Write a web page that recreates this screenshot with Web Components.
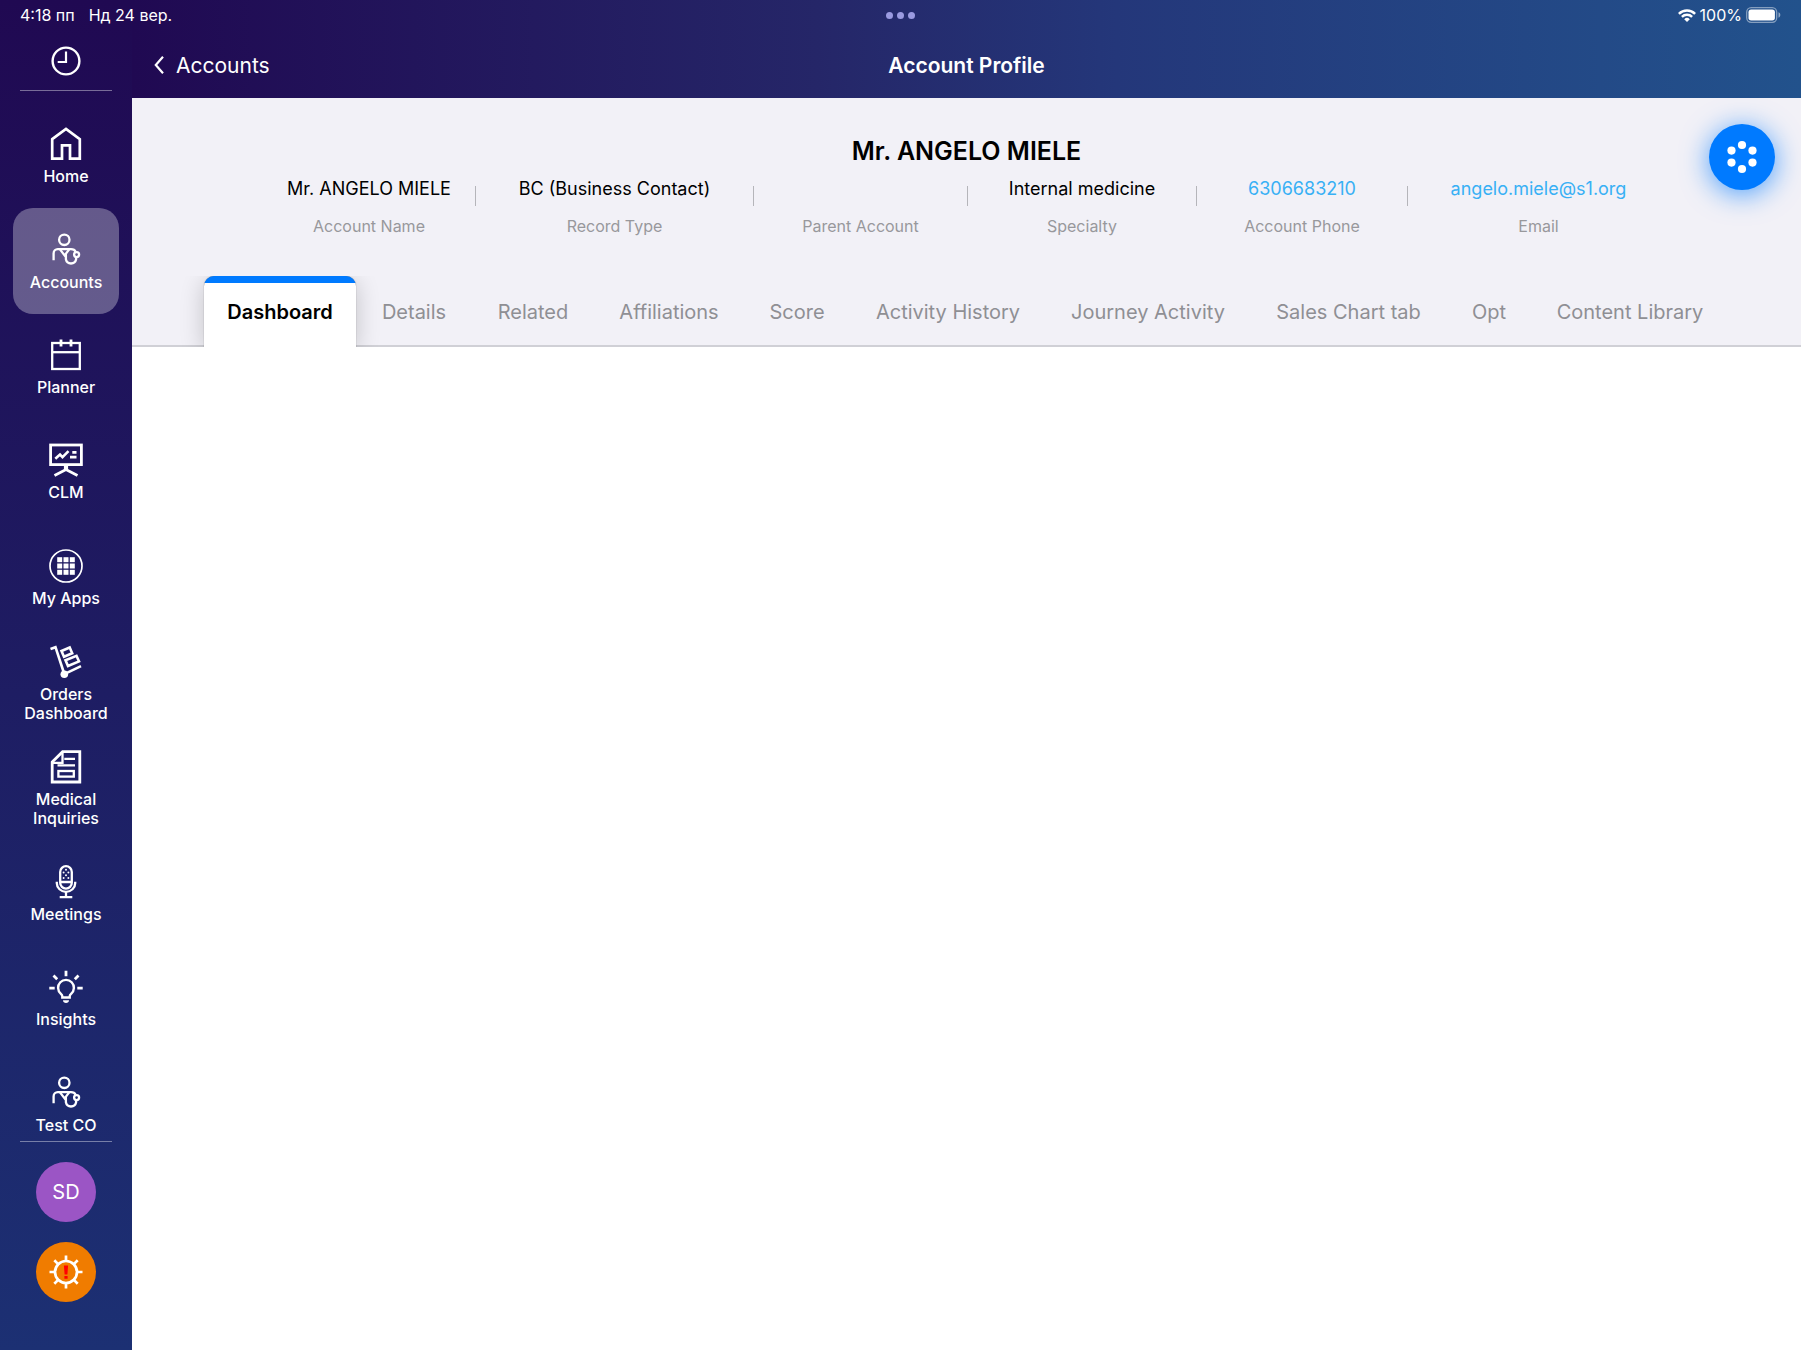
<!DOCTYPE html>
<html lang="en">
<head>
<meta charset="utf-8">
<meta name="viewport" content="width=device-width, initial-scale=1">
<title>Account Profile</title>
<style>
    body {
        margin: 0;
        background: #fff;
        font-family: Inter, "Liberation Sans", sans-serif;
        -webkit-font-smoothing: antialiased;
    }
</style>
</head>
<body>

<crm-app>
    <crm-status-bar slot="status"></crm-status-bar>

    <crm-sidebar slot="sidebar">
        <crm-nav-item icon="home">Home</crm-nav-item>
        <crm-nav-item icon="doctor" active>Accounts</crm-nav-item>
        <crm-nav-item icon="planner">Planner</crm-nav-item>
        <crm-nav-item icon="board">CLM</crm-nav-item>
        <crm-nav-item icon="apps">My Apps</crm-nav-item>
        <crm-nav-item icon="orders">Orders Dashboard</crm-nav-item>
        <crm-nav-item icon="document">Medical Inquiries</crm-nav-item>
        <crm-nav-item icon="mic">Meetings</crm-nav-item>
        <crm-nav-item icon="bulb">Insights</crm-nav-item>
        <crm-nav-item icon="doctor">Test CO</crm-nav-item>
    </crm-sidebar>

    <crm-title-bar back="Accounts">Account Profile</crm-title-bar>

    <crm-profile name="Mr. ANGELO MIELE">
        <crm-field label="Account Name">Mr. ANGELO MIELE</crm-field>
        <crm-field label="Record Type">BC (Business Contact)</crm-field>
        <crm-field label="Parent Account"></crm-field>
        <crm-field label="Specialty">Internal medicine</crm-field>
        <crm-field label="Account Phone" href="tel:6306683210">6306683210</crm-field>
        <crm-field label="Email" href="mailto:angelo.miele@s1.org">angelo.miele@s1.org</crm-field>
    </crm-profile>

    <crm-tabs>
        <crm-tab active>Dashboard</crm-tab>
        <crm-tab>Details</crm-tab>
        <crm-tab>Related</crm-tab>
        <crm-tab>Affiliations</crm-tab>
        <crm-tab>Score</crm-tab>
        <crm-tab>Activity History</crm-tab>
        <crm-tab>Journey Activity</crm-tab>
        <crm-tab>Sales Chart tab</crm-tab>
        <crm-tab>Opt</crm-tab>
        <crm-tab>Content Library</crm-tab>
    </crm-tabs>
</crm-app>

<script>
const ICONS = {
    clock: `
        <circle cx="17" cy="17" r="13.4" stroke-width="2.4"/>
        <path d="M17 7.5V18H8.7" stroke-width="2.2"/>`,
    home: `<path d="M3.2 12.2L17 2l13.8 10.2v19.4H21V18.4h-8v13.2H3.2z" stroke-width="2.7"/>`,
    doctor: `
        <circle cx="15.3" cy="6.8" r="5.2"/>
        <path d="M4.6 27.2V20.4a4.2 4.2 0 0 1 4.2-4.2H22c2.4 0 3.8.8 4.6 2.6"/>
        <path d="M11 16.4l4.6 6 4.6-6M16.9 20.5v5.8a5.2 5.2 0 0 0 10.2 0v-2"/>
        <circle cx="27.6" cy="21.6" r="2.5"/>`,
    planner: `
        <rect x="3.2" y="5" width="27.6" height="26"/>
        <path d="M3.2 14.2h27.6"/>
        <path d="M12 1.5v7M22 1.5v7" stroke-width="2.8"/>`,
    board: `
        <rect x="1.6" y="2" width="30.8" height="19.6" stroke-width="2.8"/>
        <path d="M17 22v5" stroke-width="4.2"/>
        <path d="M5.5 32.5l11.5-6 11.5 6" stroke-width="2.8"/>
        <path d="M6.3 15.7l4.7-4.2 2.5 2.6 6-6M23.3 9.4h4.2M21 14.1h6.5" stroke-width="2.6"/>`,
    apps: `
        <circle cx="17" cy="17" r="16" stroke-width="1.7"/>
        <g fill="currentColor" stroke="none">
            ${[8.2, 14.5, 20.8].map(y => [8.2, 14.5, 20.8].map(x => `<rect x="${x}" y="${y}" width="5" height="5"/>`).join('')).join('')}
        </g>`,
    orders: `
        <path d="M1.5 4l5-1.8 8.8 26.8M15.3 29.2L32 21.2" stroke-width="2.6"/>
        <circle cx="15.3" cy="29.3" r="3.8" fill="currentColor" stroke="none"/>
        <path d="M12.5 6l8.2-3.5 2.5 5.7-8.2 3.5zM16.5 15.2l11-4.4 2.5 5.6-11 4.6z" stroke-width="2.6"/>`,
    document: `
        <path d="M3.2 12L13.6 1.7h17.2V32H3.2z" stroke-width="2.8"/>
        <path d="M4 12.8h9.5V3M15.3 8.8H26M8.5 15.3H26"/>
        <rect x="9.4" y="21" width="15.4" height="5.6"/>`,
    mic: `
        <rect x="11.2" y="1.2" width="11.6" height="22.4" rx="5.8"/>
        <path d="M11.2 17h11.6M7.8 16.8v1.4a9.2 8.6 0 0 0 18.4 0v-1.4M17 27v5M10.7 32.2h12.6"/>
        <g fill="currentColor" stroke="none">
            <circle cx="17" cy="4.8" r="1"/><circle cx="14.6" cy="7.5" r="1"/><circle cx="19.4" cy="7.5" r="1"/>
            <circle cx="17" cy="10.2" r="1"/><circle cx="14.6" cy="13" r="1"/><circle cx="19.4" cy="13" r="1"/>
        </g>`,
    bulb: `
        <path d="M13.3 27.5v-1.2c0-1-.6-1.8-1.6-2.7a7.9 7.9 0 1 1 10.6 0c-1 .9-1.6 1.7-1.6 2.7v1.2z" stroke-width="2.4"/>
        <path d="M14 30.2h6c0 1.8-1.3 2.8-3 2.8s-3-1-3-2.8z" fill="currentColor" stroke="none"/>
        <path d="M17 .8v5.4M.3 18.2h5.4M28.3 18.2h5.4M4.5 5.5l3.7 3.7M29.5 5.5l-3.7 3.7" stroke-width="2.8"/>`,
    gear: `
        <circle cx="17" cy="17" r="11" stroke-width="2.7"/>
        <path d="M17 .5v5M17 28.5v5M.5 17h5M28.5 17h5M5.3 5.3l3.6 3.6M25.1 25.1l3.6 3.6M5.3 28.7l3.6-3.6M25.1 8.9l3.6-3.6" stroke-width="2.7"/>
        <path d="M14.9 10.5h4.2l-.7 9h-2.8zM15.4 21h3.2v2.7h-3.2z" fill="#f00" stroke="none"/>`,
    flower: `
        <g fill="currentColor" stroke="none">
            <circle cx="17" cy="5" r="4.1"/><circle cx="27.5" cy="10.6" r="4.1"/><circle cx="27.5" cy="22.6" r="4.1"/>
            <circle cx="17" cy="29" r="4.1"/><circle cx="6.5" cy="22.6" r="4.1"/><circle cx="6.5" cy="10.6" r="4.1"/>
        </g>`
};

class CrmIcon extends HTMLElement {

    constructor() {
        super();
        this.attachShadow({ mode: 'open' });
    }

    connectedCallback() {
        this.shadowRoot.innerHTML = `
        <style>
        :host {
            display: block;
            flex: none;
            width: 34px;
            height: 34px;
        }

        svg {
            display: block;
            overflow: visible;
        }
        </style>
        <svg viewBox="0 0 34 34" width="34" height="34" fill="none" stroke="currentColor" stroke-width="2.3" aria-hidden="true">
            ${ICONS[this.getAttribute('name')]}
        </svg>`;
    }

}

class CrmApp extends HTMLElement {

    constructor() {
        super();
        this.attachShadow({ mode: 'open' });
        this.shadowRoot.innerHTML = `
        <style>
        :host {
            display: grid;
            grid-template-columns: 132px minmax(0, 1fr);
            position: relative;
            min-height: 100vh;
        }

        main {
            display: flex;
            flex-direction: column;
        }

        slot[name="status"]::slotted(*) {
            position: absolute;
            top: 0;
            left: 0;
            right: 0;
        }
        </style>
        <slot name="sidebar"></slot>
        <main><slot></slot></main>
        <slot name="status"></slot>`;
    }

}

class CrmStatusBar extends HTMLElement {

    constructor() {
        super();
        this.attachShadow({ mode: 'open' });
        this.shadowRoot.innerHTML = `
        <style>
        :host {
            display: grid;
            grid-template-columns: 1fr auto 1fr;
            align-items: center;
            box-sizing: border-box;
            height: 32px;
            padding: 0 20px;
            color: #fff;
            font-size: 16px;
            line-height: 30px;
        }

        .time, .power, .dots {
            display: flex;
            align-items: center;
            height: 30px;
            margin-bottom: 2px;
        }

        .time {
            gap: 14px;
        }

        .dots {
            gap: 4px;
        }

        .dots i {
            width: 7px;
            height: 7px;
            border-radius: 50%;
            background: #9a9ae0;
        }

        .power {
            justify-content: flex-end;
            gap: 4px;
        }

        svg {
            display: block;
        }
        </style>
        <div class="time"><span>4:18 пп</span><span>Нд 24 вер.</span></div>
        <div class="dots"><i></i><i></i><i></i></div>
        <div class="power">
            <svg width="18" height="13" viewBox="0 0 18 13" fill="none" stroke="#fff" stroke-width="2.5">
                <path d="M.9 4.8a11.6 11.6 0 0 1 16.2 0M3.9 7.9a7.3 7.3 0 0 1 10.2 0"/>
                <path d="M9 13l-2.8-2.8a4 4 0 0 1 5.6 0z" fill="#fff" stroke="none"/>
            </svg>
            <span>100%</span>
            <svg width="35" height="16" viewBox="0 0 35 16">
                <rect x=".7" y=".7" width="30" height="14.6" rx="4.5" fill="none" stroke="#fff" stroke-opacity=".45" stroke-width="1.3"/>
                <rect x="2.5" y="2.5" width="26.4" height="11" rx="2.7" fill="#fff"/>
                <path d="M32.500 5.300c2.400.8 2.400 4.600 0 5.400z" fill="#fff" fill-opacity=".5"/>
            </svg>
        </div>`;
    }

}

class CrmSidebar extends HTMLElement {

    constructor() {
        super();
        this.attachShadow({ mode: 'open' });
        this.shadowRoot.innerHTML = `
        <style>
        :host {
            display: flex;
            flex-direction: column;
            box-sizing: border-box;
            padding: 44px 13px 48px;
            color: #fff;
            background: linear-gradient(#200952, #1c3073);
        }

        button {
            display: grid;
            place-items: center;
            padding: 0;
            border: 0;
            color: inherit;
            background: none;
            font: inherit;
            cursor: pointer;
        }

        .recent {
            align-self: center;
        }

        hr {
            width: 92px;
            height: 1px;
            margin: 0 auto;
            border: 0;
            background: rgba(255, 255, 255, .4);
        }

        .recent + hr {
            margin: 12px auto;
        }

        nav {
            display: grid;
            grid-auto-rows: 1fr;
            flex: 1;
        }

        /* the bottom rule sits inside the last row */
        footer {
            display: flex;
            flex-direction: column;
            align-items: center;
            gap: 20px;
            margin-top: -16px;
        }

        .round {
            width: 60px;
            height: 60px;
            border-radius: 50%;
            background: #9b55c5;
            font-size: 20px;
        }

        .alert {
            background: #f07c00;
        }
        </style>
        <button class="recent" aria-label="Recent"><crm-icon name="clock"></crm-icon></button>
        <hr>
        <nav><slot></slot></nav>
        <footer>
            <hr>
            <button class="round">SD</button>
            <button class="round alert" aria-label="Sync"><crm-icon name="gear"></crm-icon></button>
        </footer>`;
    }

}

class CrmNavItem extends HTMLElement {

    constructor() {
        super();
        this.attachShadow({ mode: 'open' });
    }

    connectedCallback() {
        this.shadowRoot.innerHTML = `
        <style>
        :host {
            display: grid;
        }

        a {
            display: flex;
            flex-direction: column;
            justify-content: center;
            align-items: center;
            gap: 6px;
            padding-top: 2px;
            border-radius: 20px;
            color: inherit;
            font-size: 16px;
            font-weight: 500;
            line-height: 19px;
            text-align: center;
            text-decoration: none;
        }

        :host([active]) a {
            background: rgba(255, 255, 255, .31);
        }
        </style>
        <a href="#"><crm-icon name="${this.getAttribute('icon')}"></crm-icon><span><slot></slot></span></a>`;
    }

}

class CrmTitleBar extends HTMLElement {

    constructor() {
        super();
        this.attachShadow({ mode: 'open' });
    }

    connectedCallback() {
        this.shadowRoot.innerHTML = `
        <style>
        :host {
            display: grid;
            grid-template-columns: 1fr auto 1fr;
            align-items: center;
            box-sizing: border-box;
            height: 98px;
            padding: 32px 22px 0;
            color: #fff;
            background: linear-gradient(90deg, #200952, #252668 41%, #24377a 59%, #234a87 88%, #22528c);
            font-size: 21px;
        }

        a {
            display: flex;
            align-items: center;
            gap: 12px;
            color: inherit;
            text-decoration: none;
        }

        h1 {
            margin: 0;
            font-size: 21px;
            font-weight: 600;
        }
        </style>
        <a href="#">
            <svg width="10" height="18" viewBox="0 0 10 18" fill="none" stroke="currentColor" stroke-width="2.2" aria-hidden="true">
                <path d="M9 .8L1.8 9 9 17.2"/>
            </svg>
            ${this.getAttribute('back')}
        </a>
        <h1><slot></slot></h1>`;
    }

}

class CrmProfile extends HTMLElement {

    constructor() {
        super();
        this.attachShadow({ mode: 'open' });
    }

    connectedCallback() {
        this.shadowRoot.innerHTML = `
        <style>
        :host {
            display: block;
            position: relative;
            padding: 37px 131px 38px;
            background: #f2f1f7;
        }

        h2 {
            margin: 0 0 8px;
            font-size: 25px;
            font-weight: 600;
            line-height: 32px;
            text-align: center;
        }

        .fields {
            display: grid;
            grid-template-columns: 213fr 278fr 214fr 229fr 211fr 262fr;
        }

        button {
            display: grid;
            place-items: center;
            position: absolute;
            top: 26px;
            right: 26px;
            width: 66px;
            height: 66px;
            padding: 0;
            border: 0;
            border-radius: 50%;
            color: #fff;
            background: #007aff;
            box-shadow: 0 4px 28px rgba(0, 122, 255, .7);
            cursor: pointer;
        }
        </style>
        <h2>${this.getAttribute('name')}</h2>
        <div class="fields"><slot></slot></div>
        <button aria-label="Actions"><crm-icon name="flower"></crm-icon></button>`;
    }

}

class CrmField extends HTMLElement {

    constructor() {
        super();
        this.attachShadow({ mode: 'open' });
    }

    connectedCallback() {
        const href = this.getAttribute('href');

        this.shadowRoot.innerHTML = `
        <style>
        :host {
            display: grid;
            grid-template-columns: 1fr 1px;
            text-align: center;
            white-space: nowrap;
        }

        :host::after {
            content: "";
            height: 20px;
            margin-top: 11px;
            background: #b5b5ba;
        }

        :host(:last-of-type)::after {
            background: none;
        }

        .value {
            height: 28px;
            font-size: 18px;
            line-height: 28px;
        }

        .label {
            margin-top: 11px;
            color: #98989c;
            font-size: 16px;
            line-height: 24px;
        }

        a {
            color: #38b0f5;
            text-decoration: none;
        }
        </style>
        <div>
            <div class="value">${href ? `<a href="${href}"><slot></slot></a>` : `<slot></slot>`}</div>
            <div class="label">${this.getAttribute('label')}</div>
        </div>`;
    }

}

class CrmTabs extends HTMLElement {

    constructor() {
        super();
        this.attachShadow({ mode: 'open' });
        this.shadowRoot.innerHTML = `
        <style>
        :host {
            display: grid;
            grid-template-columns: 152fr 116fr 122fr 150fr 106fr 196fr 204fr 197fr 84fr 198fr;
            height: 71px;
            padding: 0 72px;
            overflow: hidden;
            background: linear-gradient(#d0d0d6, #d0d0d6) bottom / 100% 2px no-repeat #f2f1f7;
        }
        </style>
        <slot></slot>`;
    }

    connectedCallback() {
        this.setAttribute('role', 'tablist');
    }

}

class CrmTab extends HTMLElement {

    constructor() {
        super();
        this.attachShadow({ mode: 'open' });
    }

    connectedCallback() {
        this.shadowRoot.innerHTML = `
        <style>
        :host {
            display: grid;
        }

        button {
            padding: 0;
            border: 0;
            border-radius: 10px 10px 0 0;
            color: #8f8f94;
            background: none;
            font: inherit;
            font-size: 20px;
            white-space: nowrap;
            cursor: pointer;
        }

        :host([active]) button {
            color: #000;
            background: linear-gradient(#007aff, #007aff) top / 100% 7px no-repeat #fff;
            box-shadow: 0 0 1px rgba(0, 0, 0, .5), 0 4px 24px rgba(0, 0, 0, .2);
            font-weight: 600;
        }
        </style>
        <button role="tab" aria-selected="${this.hasAttribute('active')}"><slot></slot></button>`;
    }

}

customElements.define('crm-icon', CrmIcon);
customElements.define('crm-app', CrmApp);
customElements.define('crm-status-bar', CrmStatusBar);
customElements.define('crm-sidebar', CrmSidebar);
customElements.define('crm-nav-item', CrmNavItem);
customElements.define('crm-title-bar', CrmTitleBar);
customElements.define('crm-profile', CrmProfile);
customElements.define('crm-field', CrmField);
customElements.define('crm-tabs', CrmTabs);
customElements.define('crm-tab', CrmTab);
</script>
</body>
</html>
